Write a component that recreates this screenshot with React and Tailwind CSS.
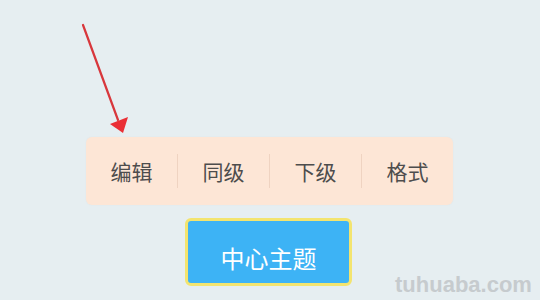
import React from "react";

const items = ["编辑", "同级", "下级", "格式"];

const App = () => {
  return (
    <div
      className="relative w-[540px] h-[300px] overflow-hidden bg-[#e6eef1] flex flex-col items-center pt-[137px]"
      style={{ fontFamily: '"Noto Sans CJK SC", "Noto Sans", sans-serif' }}
    >
      {/* 工具栏 */}
      <div className="w-[367px] h-[68px] ml-[-1px] rounded-[6px] bg-[#fde6d6] flex items-center shadow-[0_0_2px_rgba(0,0,0,0.04)]">
        {items.map((label, i) => (
          <React.Fragment key={label}>
            {i > 0 && <div className="w-px h-[34px] bg-[#efd3c1]" />}
            <div className="flex-1 flex items-center justify-center text-[21px] leading-none text-[#4d4d4d]">
              {label}
            </div>
          </React.Fragment>
        ))}
      </div>

      {/* 中心主题 */}
      <div className="mt-[13px] ml-[-3px] w-[167px] h-[68px] rounded-[6px] border-[3px] border-[#f3e46f] bg-[#3db3f5] flex items-center justify-center pt-[12px] text-white text-[24px] leading-none">
        中心主题
      </div>

      {/* 箭头 */}
      <svg className="absolute left-0 top-0" width="540" height="300">
        <line x1="83" y1="25" x2="118" y2="120" stroke="#d8373c" strokeWidth="2.2" strokeLinecap="round" />
        <polygon points="110,124 128,117 123,133" fill="#ea2f35" />
      </svg>

      {/* 水印 */}
      <div
        className="absolute left-[395px] top-[274px] text-[22px] font-bold leading-none text-[#c6cbce]"
        style={{ fontFamily: '"Liberation Sans", Arial, sans-serif' }}
      >
        tuhuaba.com
      </div>
    </div>
  );
};

export default App;
